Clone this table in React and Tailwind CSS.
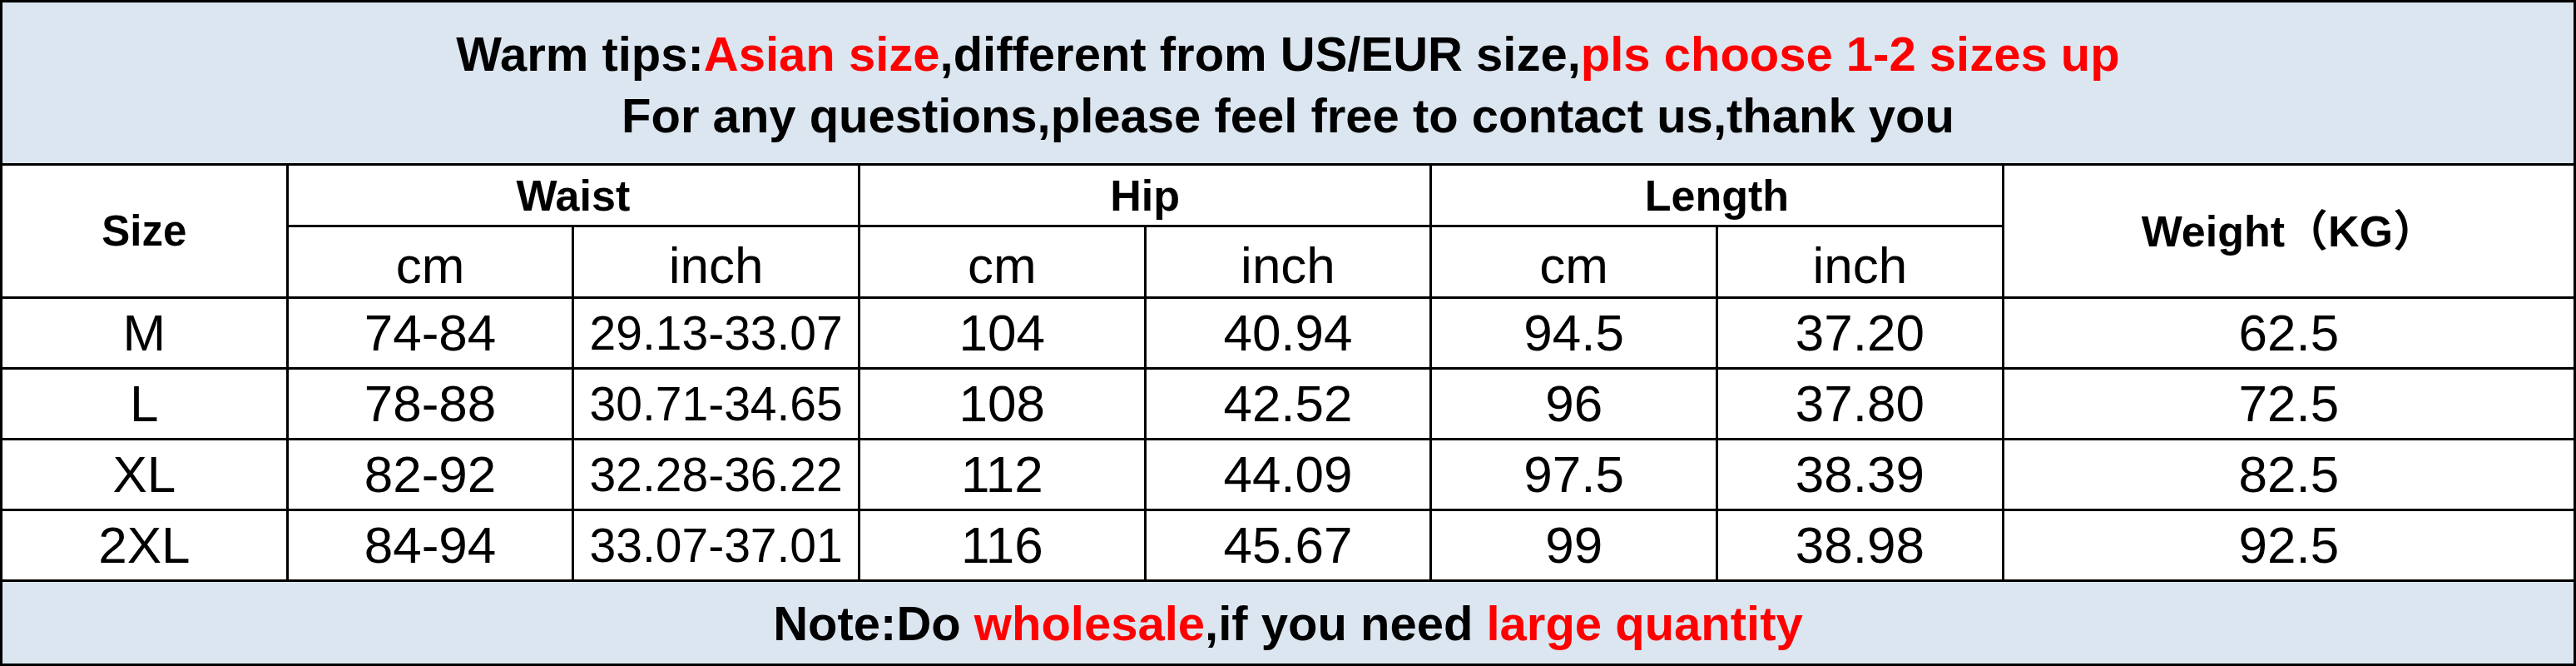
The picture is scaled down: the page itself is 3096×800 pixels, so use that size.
import React from "react";

const rows = [
  ["M", "74-84", "29.13-33.07", "104", "40.94", "94.5", "37.20", "62.5"],
  ["L", "78-88", "30.71-34.65", "108", "42.52", "96", "37.80", "72.5"],
  ["XL", "82-92", "32.28-36.22", "112", "44.09", "97.5", "38.39", "82.5"],
  ["2XL", "84-94", "33.07-37.01", "116", "45.67", "99", "38.98", "92.5"],
];

function Cell({ className = "", children }) {
  return (
    <div className={`bg-white flex items-center justify-center leading-none ${className}`}>
      {children}
    </div>
  );
}

function App() {
  return (
    <div className="w-[3096px] h-[800px] bg-black p-[3px] flex flex-col gap-[3px] text-black font-['Liberation_Sans','Noto_Sans_CJK_SC',sans-serif]">
      <div className="h-[193px] bg-[#dce6f0] flex flex-col items-center justify-center pt-1 font-bold text-[58px] leading-[74px]">
        <p>
          Warm tips:<span className="text-[#ff0000]">Asian size</span>,different from US/EUR size,
          <span className="text-[#ff0000]">pls choose 1-2 sizes up</span>
        </p>
        <p>For any questions,please feel free to contact us,thank you</p>
      </div>

      <div className="grid grid-cols-9 grid-rows-[71px_83px_82px_82px_82px_82px] gap-[3px]">
        <Cell className="row-span-2 font-bold text-[51px]">Size</Cell>
        <Cell className="col-span-2 font-bold text-[52px]">Waist</Cell>
        <Cell className="col-span-2 font-bold text-[52px]">Hip</Cell>
        <Cell className="col-span-2 font-bold text-[52px]">Length</Cell>
        <Cell className="col-span-2 row-span-2 font-bold text-[52px]">Weight（KG）</Cell>
        {["cm", "inch", "cm", "inch", "cm", "inch"].map((u, i) => (
          <Cell key={i} className="text-[62px] pt-2">
            {u}
          </Cell>
        ))}
        {rows.map((r) => (
          <React.Fragment key={r[0]}>
            <Cell className="text-[62px]">{r[0]}</Cell>
            <Cell className="text-[62px]">{r[1]}</Cell>
            <Cell className="text-[57px]">{r[2]}</Cell>
            <Cell className="text-[62px]">{r[3]}</Cell>
            <Cell className="text-[62px]">{r[4]}</Cell>
            <Cell className="text-[62px]">{r[5]}</Cell>
            <Cell className="text-[62px]">{r[6]}</Cell>
            <Cell className="col-span-2 text-[62px]">{r[7]}</Cell>
          </React.Fragment>
        ))}
      </div>

      <div className="flex-1 bg-[#dce6f0] flex items-center justify-center font-bold text-[58px]">
        <p>
          Note:Do <span className="text-[#ff0000]">wholesale</span>,if you need{" "}
          <span className="text-[#ff0000]">large quantity</span>
        </p>
      </div>
    </div>
  );
}

export default App;
